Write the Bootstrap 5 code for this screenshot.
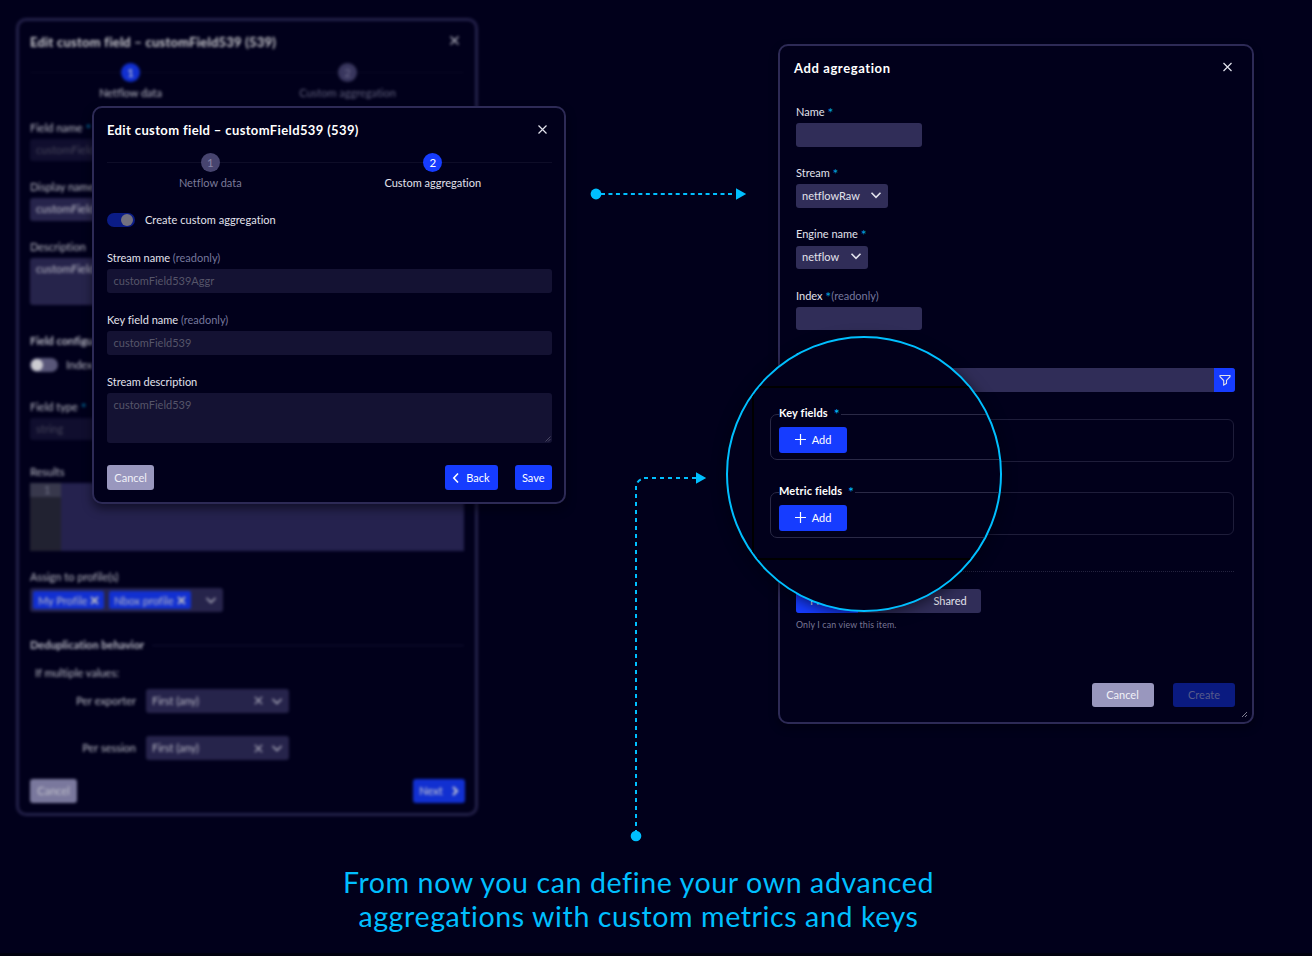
<!DOCTYPE html>
<html lang="en">
<head>
<meta charset="utf-8">
<meta name="viewport" content="width=device-width, initial-scale=1">
<title>Custom aggregations</title>
<link href="https://cdn.jsdelivr.net/npm/bootstrap@5.3.0/dist/css/bootstrap.min.css" rel="stylesheet">
<style>
  :root { --ink:#01001b; --edge:#2d2a56; --field:#302d58; --field-off:#141233; --blue:#163cff; --sky:#00bfff; --muted:#7b7a98; }
  body { width:1312px; height:956px; overflow:hidden; background:var(--ink); color:#e2e2ec; font-family:Lato,"Liberation Sans",sans-serif; font-size:11px; line-height:16px; font-variant-ligatures:none; border-bottom:3px solid #00000e; }
  .stage { width:1312px; height:953px; }
  .win { background:var(--ink); border:2px solid var(--edge); border-radius:10px; }
  .win-back { left:16px; top:18px; width:462px; height:798px; border-width:3px; padding:8.500px 11px; filter:blur(1.35px); opacity:.8; }
  .win-front { left:92px; top:106px; width:474px; height:398px; padding:10px 12px 0 13px; box-shadow:0 5px 10px rgba(0,0,10,.5); }
  .win-add { left:778px; top:44px; width:476px; height:680px; padding:10px 17px 0 16px; box-shadow:0 4px 8px rgba(0,0,0,.35); }
  .win-head { height:24px; }
  .win-title { font-size:13px; font-weight:700; line-height:24px; letter-spacing:.37px; color:#fff; margin:0; white-space:nowrap; }
  .win-add .win-title { letter-spacing:.6px; }
  .win-back .win-title { letter-spacing:.23px; }
  svg { display:block; flex:none; }
  .ic { fill:none; stroke:currentColor; stroke-width:1.4; }
  .stepper { position:relative; }
  .stepper::before { content:""; position:absolute; left:0; right:0; top:9px; height:1px; background:#0e0d28; }
  .stepper-in { margin-left:-9px; margin-right:9px; position:relative; }
  .win-front .stepper-in { margin-left:-8px; margin-right:8px; }
  .win-back .stepper-in { margin-left:-8px; margin-right:8px; }
  .dot { width:19px; height:19px; border-radius:50%; background:#47446f; color:#8886a8; font-size:11.5px; line-height:19px; text-align:center; margin-bottom:3px; }
  .dot.on { background:var(--blue); color:#fff; }
  .step-off { color:var(--muted); }
  .flabel { display:block; height:16px; white-space:nowrap; }
  .flabel b, .fset b, .sect { font-weight:700; }
  .star { color:#029fda; font-size:14px; line-height:10px; vertical-align:-2px; }
  .ro { color:#75779c; }
  .ctl { height:23.5px; margin-top:3.3px; border-radius:3px; background:var(--field); padding:0 6px; line-height:23px; white-space:nowrap; }
  .ctl-off { background:var(--field-off); color:#565569; }
  .win-add .ctl { padding-bottom:2px; }
  .win-add .fgroup + .fgroup { margin-top:18.4px; }
  .win-front .fgroup + .fgroup { margin-top:19.1px; }
  .win-front .ctl { padding-left:6.5px; }
  .win-back .ctl { height:22.5px; margin-top:3px; line-height:22px; }
  .win-back .fgroup + .fgroup { margin-top:18px; }
  .win-front .area-front { height:49.5px; position:relative; }
  .grip { right:1px; bottom:1px; }
  .win-back .area-back { height:47px; line-height:22px; }
  .tgl { width:28px; height:14px; border-radius:7px; padding:1px; }
  .tgl i { display:block; width:12px; height:12px; border-radius:50%; }
  .tgl-on { background:#0b1c86; } .tgl-on i { background:#73717f; margin-left:13px; }
  .tgl-no { background:#6f6d91; } .tgl-no i { background:#fff; }
  .b { height:24.5px; border:0; border-radius:3px; padding:0; font-size:11px; line-height:24px; color:#fff; display:flex; align-items:center; justify-content:center; background:var(--blue); }
  .b-gray { background:#9997be; color:#f1f1f8; }
  .b-off { background:#0a1a80; color:#575b8b; }
  .w47 { width:47.2px; } .w53 { width:53px; } .w37 { width:37.5px; } .w62 { width:62px; }
  .short { width:126px; }
  .fbox { height:43px; border:1px solid #1e1d3a; border-radius:6px; margin-right:1px; }
  .dots { border-top:1px dotted #24233f; margin:36px 1px 0 0; height:1px; }
  .seg { width:185px; height:24px; border-radius:3px; overflow:hidden; background:var(--field); line-height:24px; text-align:center; }
  .hint { font-size:8.8px; letter-spacing:.16px; color:var(--muted); }
  .editor { height:67.5px; margin-top:3px; background:#2e2b5b; }
  .gutter { width:31px; background:#2a2b37; }
  .gutter span { display:block; height:14px; line-height:14px; background:#464759; color:#8d8da0; padding-left:14px; }
  .chip { height:17.5px; line-height:17px; background:var(--blue); border-radius:2px; padding:0 5px; display:flex; align-items:center; justify-content:space-between; }
  .pair-l { width:106px; text-align:right; margin-right:10px; }
  .pair .ctl { width:143px; height:24px; margin:0; }
  .lens { left:726px; top:336px; width:276px; height:276px; border:2px solid var(--sky); border-radius:50%; overflow:hidden; background:var(--ink); }
  .lens-shade { left:726px; top:336px; width:276px; height:276px; border-radius:50%; box-shadow:0 3px 14px rgba(0,0,12,.6); }
  .lens-in { margin:48px 0 0 24px; width:280px; height:174px; border:solid #000; border-width:2px 0 2px 2px; padding:18px 0 0 16px; }
  .fset { height:61px; margin-bottom:17px; }
  .fset-box { height:46px; border:1px solid #2a2946; border-radius:7px; margin-top:8px; padding:0 8px; position:relative; }
  .fset-box .leg { display:inline-block; position:relative; top:-10px; height:16px; background:var(--ink); color:#fff; letter-spacing:.13px; white-space:nowrap; padding-right:1px; }
  .fset-box .star { color:var(--sky); }
  .fset-box .b { width:68px; height:25.5px; margin-top:-4px; }
  .cap { left:0; width:1277px; top:865px; font-size:28.6px; line-height:34px; letter-spacing:.58px; color:var(--sky); }
</style>
</head>
<body>
<main class="stage position-relative">

  <section class="win win-back position-absolute">
    <div class="win-head d-flex justify-content-between align-items-center"><h1 class="win-title">Edit custom field – customField539 (539)</h1>
      <svg class="ic" style="margin-right:3px;margin-top:-2px" width="13" height="13" viewBox="0 0 13 13"><path d="M2.500 2.500l8 8M10.500 2.500l-8 8"/></svg></div>
    <div class="stepper" style="margin-top:9px"><div class="stepper-in row g-0">
      <div class="col-6 d-flex flex-column align-items-center"><div class="dot on">1</div>Netflow data</div>
      <div class="col-6 d-flex flex-column align-items-center step-off"><div class="dot">2</div>Custom aggregation</div></div></div>
    <div style="margin-top:19px">
      <div class="fgroup"><label class="flabel">Field name <span class="star">*</span></label><div class="ctl ctl-off">customField539</div></div>
      <div class="fgroup"><label class="flabel">Display name <span class="star">*</span></label><div class="ctl">customField539</div></div>
      <div class="fgroup"><label class="flabel">Description</label><div class="ctl area-back">customField539</div></div>
    </div>
    <div class="sect text-nowrap overflow-hidden" style="margin-top:28px;width:64px">Field configu</div>
    <div class="d-flex align-items-center" style="margin-top:8px;height:16px"><div class="tgl tgl-no"><i></i></div><span class="ms-2">Index</span></div>
    <div style="margin-top:26px"><label class="flabel">Field type <span class="star">*</span></label><div class="ctl ctl-off">string</div></div>
    <div style="margin-top:24px"><label class="flabel">Results</label><div class="editor d-flex"><div class="gutter"><span>1</span></div></div></div>
    <div style="margin-top:18.5px"><label class="flabel">Assign to profile(s)</label>
      <div class="ctl d-flex align-items-center" style="width:192.500px;height:24px;padding-left:3px">
        <div class="chip" style="width:71px">My Profile <svg class="ic" style="stroke-width:2" width="9" height="9" viewBox="0 0 9 9"><path d="M1 1l7 7M8 1L1 8"/></svg></div>
        <div class="chip" style="width:82px;margin-left:5px">Nbox profile <svg class="ic" style="stroke-width:2" width="9" height="9" viewBox="0 0 9 9"><path d="M1 1l7 7M8 1L1 8"/></svg></div>
        <svg class="ic ms-auto" width="12" height="12" viewBox="0 0 12 12"><path d="M1.500 4L6 8.500 10.500 4"/></svg></div></div>
    <div class="d-flex align-items-center" style="margin-top:25px"><span class="sect">Deduplication behavior</span><span class="flex-grow-1 ms-2" style="height:1px;background:#18173a"></span></div>
    <div style="margin:12px 0 0 5px">If multiple values:</div>
    <div class="pair d-flex align-items-center" style="margin-top:7.5px"><span class="pair-l">Per exporter</span><div class="ctl d-flex align-items-center">First (any)
      <svg class="ic ms-auto" width="9" height="9" viewBox="0 0 10 10"><path d="M1 1l8 8M9 1L1 9"/></svg><svg class="ic ms-2" width="12" height="12" viewBox="0 0 12 12"><path d="M1.500 4L6 8.500 10.500 4"/></svg></div></div>
    <div class="pair d-flex align-items-center" style="margin-top:23.5px"><span class="pair-l">Per session</span><div class="ctl d-flex align-items-center">First (any)
      <svg class="ic ms-auto" width="9" height="9" viewBox="0 0 10 10"><path d="M1 1l8 8M9 1L1 9"/></svg><svg class="ic ms-2" width="12" height="12" viewBox="0 0 12 12"><path d="M1.500 4L6 8.500 10.500 4"/></svg></div></div>
    <div class="d-flex justify-content-between" style="margin-top:18.500px"><button class="b b-gray w47">Cancel</button>
      <button class="b" style="width:52px;margin-right:-1px">Next <svg class="ic ms-2" style="stroke-width:2" width="8" height="12" viewBox="0 0 8 12"><path d="M2 2l4 4-4 4"/></svg></button></div>
  </section>

  <section class="win win-front position-absolute">
    <div class="win-head d-flex justify-content-between align-items-center"><h2 class="win-title">Edit custom field – customField539 (539)</h2>
      <svg class="ic" style="margin-right:3px;margin-top:-1px;stroke-width:1.2" width="13" height="13" viewBox="0 0 13 13"><path d="M2.500 2.500l8 8M10.500 2.500l-8 8"/></svg></div>
    <div class="stepper" style="margin-top:10.5px"><div class="stepper-in row g-0">
      <div class="col-6 d-flex flex-column align-items-center step-off"><div class="dot">1</div>Netflow data</div>
      <div class="col-6 d-flex flex-column align-items-center"><div class="dot on">2</div>Custom aggregation</div></div></div>
    <div class="d-flex align-items-center" style="margin-top:21.500px;height:16px"><div class="tgl tgl-on"><i></i></div><span style="margin-left:10px;letter-spacing:.05px">Create custom aggregation</span></div>
    <div style="margin-top:22px">
      <div class="fgroup"><label class="flabel">Stream name <span class="ro">(readonly)</span></label><div class="ctl ctl-off">customField539Aggr</div></div>
      <div class="fgroup"><label class="flabel">Key field name <span class="ro">(readonly)</span></label><div class="ctl ctl-off">customField539</div></div>
      <div class="fgroup"><label class="flabel">Stream description</label><div class="ctl ctl-off area-front">customField539
        <svg class="grip position-absolute" width="6" height="6" viewBox="0 0 6 6" stroke="#55546e" stroke-width=".8"><path d="M.5 5.500l5-5M3 5.500L5.500 3"/></svg></div></div>
    </div>
    <div class="d-flex" style="margin-top:22.700px"><button class="b b-gray w47">Cancel</button>
      <button class="b w53 ms-auto"><svg class="ic" style="stroke-width:1.6;margin-right:6px" width="8" height="12" viewBox="0 0 8 12"><path d="M6 1.500L1.800 6 6 10.500"/></svg>Back</button>
      <button class="b w37" style="margin-left:17px">Save</button></div>
  </section>

  <section class="win win-add position-absolute">
    <div class="win-head d-flex justify-content-between align-items-center" style="margin-left:-2px"><h2 class="win-title">Add agregation</h2>
      <svg class="ic" style="margin-right:1px;margin-top:-1px;stroke-width:1.2" width="13" height="13" viewBox="0 0 13 13"><path d="M2.500 2l8 8M10.500 2l-8 8"/></svg></div>
    <div style="margin-top:24px">
      <div class="fgroup"><label class="flabel">Name <span class="star">*</span></label><div class="ctl short"></div></div>
      <div class="fgroup"><label class="flabel">Stream <span class="star">*</span></label><div class="ctl d-flex align-items-center justify-content-between" style="width:92px">netflowRaw
        <svg class="ic" style="stroke-width:1.6" width="12" height="12" viewBox="0 0 12 12"><path d="M1.500 3.800L6 8.300l4.500-4.500"/></svg></div></div>
      <div class="fgroup"><label class="flabel">Engine name <span class="star">*</span></label><div class="ctl d-flex align-items-center justify-content-between" style="width:72px">netflow
        <svg class="ic" style="stroke-width:1.6" width="12" height="12" viewBox="0 0 12 12"><path d="M1.500 3.800L6 8.300l4.500-4.500"/></svg></div></div>
      <div class="fgroup"><label class="flabel">Index <span class="star">*</span><span class="ro">(readonly)</span></label><div class="ctl short"></div></div>
      <div class="fgroup"><label class="flabel">Filter</label><div class="ctl d-flex justify-content-end p-0 overflow-hidden"><div class="d-flex align-items-center justify-content-center" style="width:21px;background:var(--blue)">
        <svg class="ic" style="stroke-width:1.1" width="12" height="12" viewBox="0 0 12 12"><path d="M1 1.500h10v1.200L7.500 6.500v3L4.700 11V6.500L1 2.700z"/></svg></div></div></div>
    </div>
    <div class="fbox" style="margin-top:27.100px"></div>
    <div class="fbox" style="margin-top:30.500px"></div>
    <div class="dots"></div>
    <div class="seg d-flex" style="margin-top:17px"><span style="width:62px;background:var(--blue)">Private</span><span style="width:61px"></span><span style="width:62px">Shared</span></div>
    <div class="hint" style="margin-top:4px">Only I can view this item.</div>
    <div class="d-flex justify-content-end" style="margin-top:49.500px"><button class="b b-gray w62">Cancel</button><button class="b b-off w62" style="margin-left:19.500px">Create</button></div>
    <svg class="position-absolute" style="right:4px;bottom:4px" width="7" height="7" viewBox="0 0 7 7" stroke="#8d8c9f" stroke-width=".9"><path d="M1 6l5-5M4 6l2-2"/></svg>
  </section>

  <div class="lens-shade position-absolute"></div>
  <section class="lens position-absolute">
    <div class="lens-in">
      <div class="fset"><div class="fset-box"><span class="leg"><b>Key fields</b> &nbsp;<span class="star">*</span></span>
        <button class="b"><svg class="ic" style="stroke-width:1.2;margin-right:6px" width="11" height="11" viewBox="0 0 11 11"><path d="M5.500 0v11M0 5.500h11"/></svg>Add</button></div></div>
      <div class="fset"><div class="fset-box"><span class="leg"><b>Metric fields</b> &nbsp;<span class="star">*</span></span>
        <button class="b"><svg class="ic" style="stroke-width:1.2;margin-right:6px" width="11" height="11" viewBox="0 0 11 11"><path d="M5.500 0v11M0 5.500h11"/></svg>Add</button></div></div>
    </div>
  </section>

  <svg class="position-absolute" style="left:580px;top:180px" width="180" height="670" viewBox="580 180 180 670" fill="#00bfff">
    <g fill="none" stroke="#00bfff" stroke-width="2">
      <path d="M601 194H735" stroke-dasharray="4 3.470"/>
      <path d="M644 478H696" stroke-dasharray="4 4"/>
      <path d="M637.500 482.500Q638.500 480.500 640.800 479.500"/>
      <path d="M636 486V832" stroke-dasharray="4 4"/>
    </g>
    <circle cx="596" cy="194" r="5.400"/><circle cx="636" cy="836" r="5.300"/>
    <path d="M736 188.300L746.200 194 736 199.700zM696 472.300L706.200 478 696 483.700z"/>
  </svg>

  <p class="cap position-absolute text-center m-0">From now you can define your own advanced<br>aggregations with custom metrics and keys</p>
</main>
<script src="https://cdn.jsdelivr.net/npm/bootstrap@5.3.0/dist/js/bootstrap.bundle.min.js"></script>
</body>
</html>
